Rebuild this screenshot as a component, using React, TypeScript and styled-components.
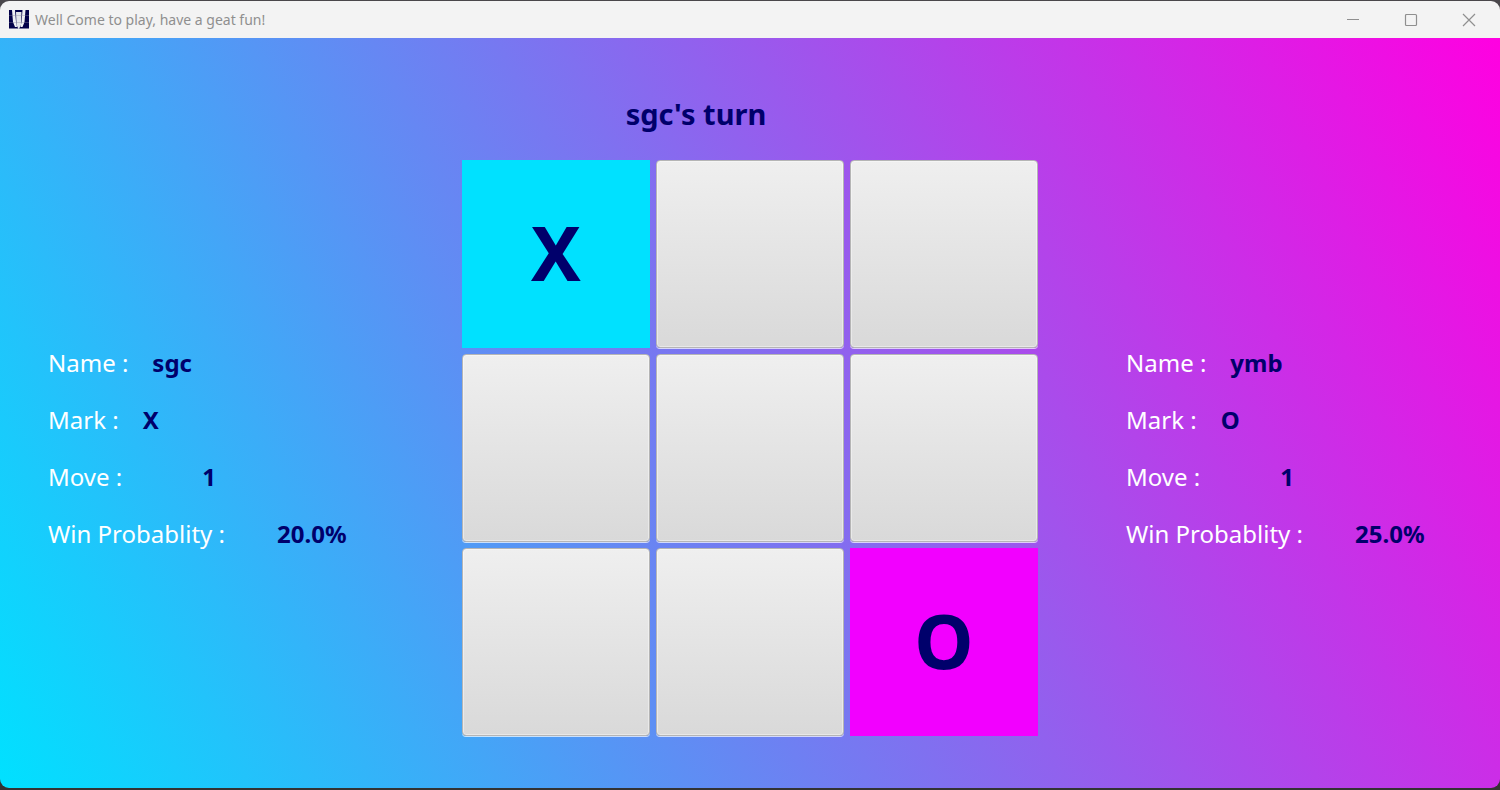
import React from "react";
import styled, { createGlobalStyle, css } from "styled-components";

const GlobalStyle = createGlobalStyle`
  *, *::before, *::after { box-sizing: border-box; }
  body {
    margin: 0;
    background: #333333;
    font-family: "Segoe UI", "Noto Sans", "Open Sans", sans-serif;
  }
`;

const Desktop = styled.div`
  display: flex;
  flex-direction: column;
  min-height: 100vh;
  padding: 1px 0 2px;
  background: linear-gradient(#4a474b, #333333);
`;

const Window = styled.div`
  display: flex;
  flex: 1;
  flex-direction: column;
  overflow: hidden;
  border-radius: 9px;
`;

const TitleBar = styled.header`
  display: flex;
  align-items: center;
  height: 37px;
  padding: 0 2px 0 9px;
  background: #f3f3f3;
  color: #8f8f8f;
`;

const AppIcon = styled.svg`
  width: 20px;
  height: 20px;
  margin-right: 6px;
`;

const Title = styled.h1`
  flex: 1;
  margin: 0;
  font-size: 14px;
  font-weight: 400;
  line-height: 20px;
`;

const WindowButton = styled.button`
  display: grid;
  place-items: center;
  width: 58px;
  height: 36px;
  padding: 0;
  border: 0;
  background: none;
  color: inherit;

  svg {
    width: 14px;
    height: 14px;
    fill: none;
    stroke: currentColor;
    stroke-width: 1.2;
  }
`;

const Scene = styled.main`
  display: grid;
  flex: 1;
  grid-template-columns: minmax(300px, 1fr) auto minmax(300px, 1fr);
  align-items: center;
  padding: 0 0 52px;
  background: linear-gradient(63deg, #00e1ff, #ff00e1);
`;

const Game = styled.section`
  display: flex;
  flex-direction: column;
  padding-top: 52px;
`;

const Turn = styled.h2`
  margin: 0;
  padding: 2px 108px 24px 0;
  color: #00006b;
  font-size: 29px;
  font-weight: 700;
  line-height: 44px;
  text-align: center;
`;

const Board = styled.div`
  display: grid;
  grid-template-columns: repeat(3, 188px);
  grid-auto-rows: 188px;
  gap: 6px;
`;

const marks = {
  X: css`
    background: #00e1ff;
  `,
  O: css`
    background: #f200ff;
  `,
};

const emptyCell = css`
  border: 1px solid #b5b5b5;
  border-radius: 4px;
  background: linear-gradient(#efefef, #d9d9d9);
  box-shadow: inset 0 0 0 1px rgba(255, 255, 255, 0.4), 0 1px 0 rgba(255, 255, 255, 0.7);
`;

const Cell = styled.button<{ $mark?: "X" | "O" }>`
  padding: 0 0 4px;
  border: 0;
  color: #00006b;
  font-family: inherit;
  font-size: 75px;
  font-weight: 700;
  line-height: 100px;
  ${({ $mark }) => ($mark ? marks[$mark] : emptyCell)}
`;

const Player = styled.dl<{ $side: "left" | "right" }>`
  display: flex;
  flex-direction: column;
  gap: 21px;
  margin: 0;
  padding-top: 122px;
  padding-left: ${({ $side }) => ($side === "left" ? 48 : 88)}px;
`;

const Stat = styled.div<{ $gap: number }>`
  display: flex;
  gap: ${({ $gap }) => $gap}px;
  font-size: 24px;
  line-height: 36px;
  white-space: nowrap;
`;

const Label = styled.dt`
  color: #ffffff;
`;

const Value = styled.dd`
  margin: 0;
  color: #00006b;
  font-weight: 700;
`;

type PlayerInfo = { name: string; mark: "X" | "O"; moves: number; chance: string };

const first: PlayerInfo = { name: "sgc", mark: "X", moves: 1, chance: "20.0%" };
const second: PlayerInfo = { name: "ymb", mark: "O", moves: 1, chance: "25.0%" };
const board: ("X" | "O" | undefined)[] = ["X", undefined, undefined, undefined, undefined, undefined, undefined, undefined, "O"];

function PlayerPanel({ player, side }: { player: PlayerInfo; side: "left" | "right" }) {
  return (
    <Player $side={side}>
      <Stat $gap={24}>
        <Label>Name :</Label>
        <Value>{player.name}</Value>
      </Stat>
      <Stat $gap={24}>
        <Label>Mark :</Label>
        <Value>{player.mark}</Value>
      </Stat>
      <Stat $gap={80}>
        <Label>Move :</Label>
        <Value>{player.moves}</Value>
      </Stat>
      <Stat $gap={52}>
        <Label>Win Probablity :</Label>
        <Value>{player.chance}</Value>
      </Stat>
    </Player>
  );
}

export default function App() {
  return (
    <>
      <GlobalStyle />
      <Desktop>
        <Window>
          <TitleBar>
            <AppIcon viewBox="0 0 20 20" aria-hidden="true">
              <path d="M0 0h20v18.500H0z" fill="#030149" />
              <path d="M3 0h3l1 12 1 5H6L4 12z" fill="#f0f1f4" />
              <path d="M16.500 0h-3l-1 12-1 5h2l2-5z" fill="#f0f1f4" />
              <path d="M7 2h5.500l-.5 13-2.300 4.500L7.500 15z" fill="#e4e6ea" />
              <path d="M0 5.500h20M0 12.500h20" stroke="#8a8aa0" strokeWidth=".6" opacity=".6" />
            </AppIcon>
            <Title>Well Come to play, have a geat fun!</Title>
            <WindowButton aria-label="Minimize">
              <svg viewBox="0 0 14 14"><path d="M1 6.500h12" /></svg>
            </WindowButton>
            <WindowButton aria-label="Maximize">
              <svg viewBox="0 0 14 14"><rect x="1.500" y="1.500" width="11" height="11" rx="1" /></svg>
            </WindowButton>
            <WindowButton aria-label="Close">
              <svg viewBox="0 0 14 14"><path d="M1 1l12 12M13 1L1 13" /></svg>
            </WindowButton>
          </TitleBar>
          <Scene>
            <PlayerPanel player={first} side="left" />
            <Game>
              <Turn>sgc's turn</Turn>
              <Board>
                {board.map((mark, i) => (
                  <Cell key={i} $mark={mark} aria-label={mark ? undefined : `Square ${i + 1}`}>
                    {mark}
                  </Cell>
                ))}
              </Board>
            </Game>
            <PlayerPanel player={second} side="right" />
          </Scene>
        </Window>
      </Desktop>
    </>
  );
}
